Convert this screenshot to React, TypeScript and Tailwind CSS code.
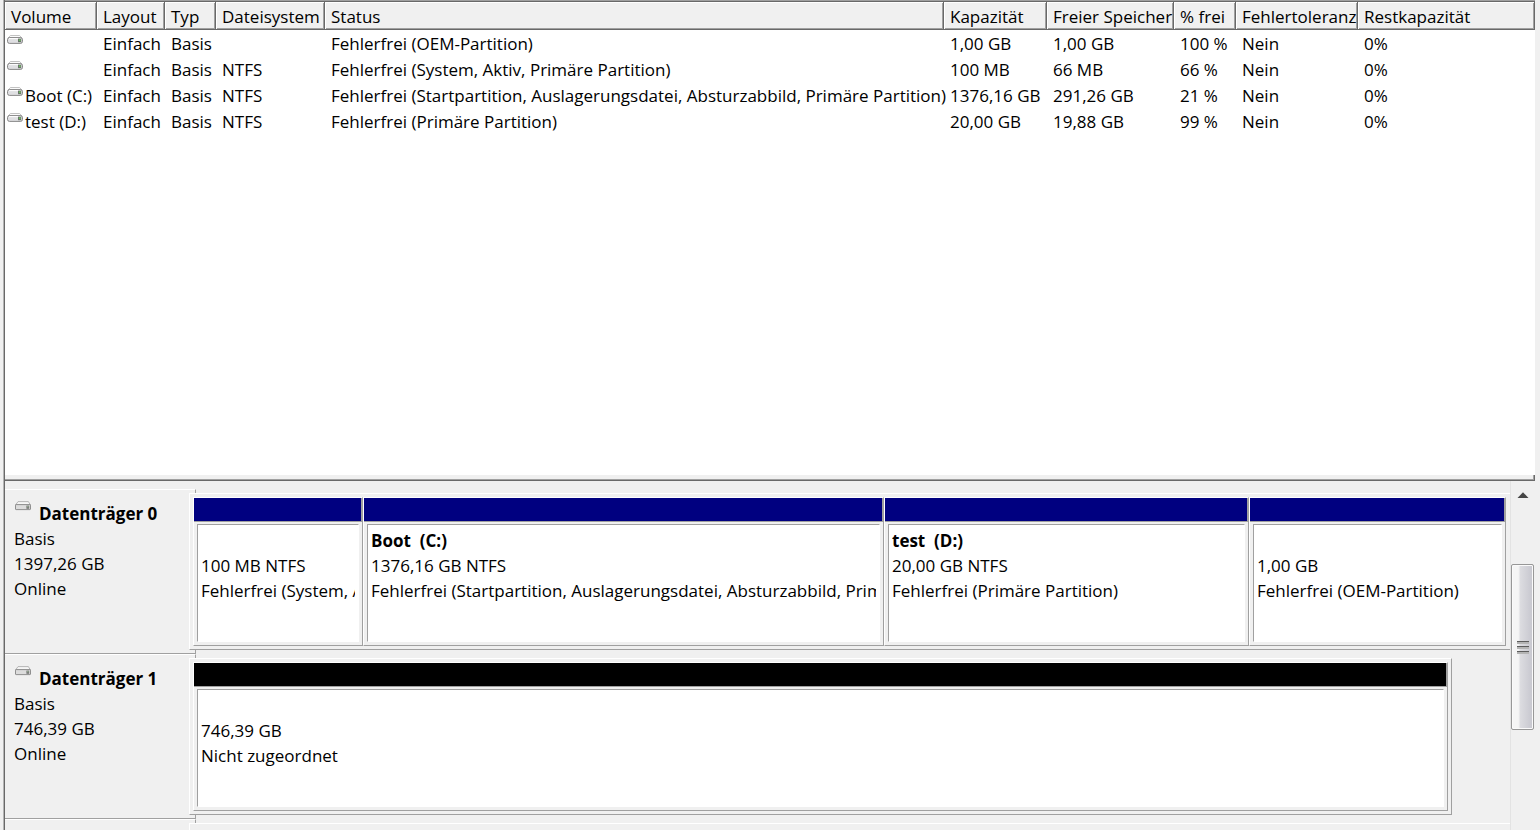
import React from "react";

type Volume = {
  name: string;
  fileSystem: string;
  status: string;
  capacity: string;
  free: string;
  percent: string;
};

const columns = [
  { label: "Volume", width: "w-[92px]" },
  { label: "Layout", width: "w-[68px]" },
  { label: "Typ", width: "w-[51px]" },
  { label: "Dateisystem", width: "w-[109px]" },
  { label: "Status", width: "w-[619px]" },
  { label: "Kapazität", width: "w-[103px]" },
  { label: "Freier Speicher", width: "w-[127px]" },
  { label: "% frei", width: "w-[62px]" },
  { label: "Fehlertoleranz", width: "w-[122px]" },
  { label: "Restkapazität", width: "w-auto" },
];

const volumes: Volume[] = [
  { name: "", fileSystem: "", status: "Fehlerfrei (OEM-Partition)", capacity: "1,00 GB", free: "1,00 GB", percent: "100 %" },
  { name: "", fileSystem: "NTFS", status: "Fehlerfrei (System, Aktiv, Primäre Partition)", capacity: "100 MB", free: "66 MB", percent: "66 %" },
  { name: "Boot (C:)", fileSystem: "NTFS", status: "Fehlerfrei (Startpartition, Auslagerungsdatei, Absturzabbild, Primäre Partition)", capacity: "1376,16 GB", free: "291,26 GB", percent: "21 %" },
  { name: "test (D:)", fileSystem: "NTFS", status: "Fehlerfrei (Primäre Partition)", capacity: "20,00 GB", free: "19,88 GB", percent: "99 %" },
];

function DriveIcon({ muted = false }: { muted?: boolean }) {
  return muted ? (
    <svg viewBox="0 0 16 10" className="h-2.5 w-4 shrink-0" aria-hidden="true">
      <path d="M3 .6h10.4L15.4 4H.6z" fill="#f6f6f6" stroke="#a6a6a6" strokeWidth=".8" />
      <rect x=".5" y="3.6" width="15" height="5" rx=".6" fill="#dcdcdc" stroke="#858585" strokeWidth=".9" />
      <rect x="11.4" y="4.6" width="2.8" height="3.2" fill="#777777" />
      <rect x="12.4" y="5" width="1" height="1.3" fill="#9fc29a" />
    </svg>
  ) : (
    <svg viewBox="0 0 16 10" className="h-2.5 w-4 shrink-0" aria-hidden="true">
      <path d="M3.4.5h9.2L14.8 3H1.2z" fill="#fbfbfb" stroke="#b4b4b4" strokeWidth=".8" />
      <rect x=".5" y="2.6" width="15" height="5.8" rx="2" fill="#dfdfe2" stroke="#7d7d7d" strokeWidth=".9" />
      <path d="M2 3.6h9" stroke="#ffffff" />
      <rect x="11" y="3.8" width="3.2" height="3.4" fill="#687568" />
      <rect x="12.2" y="4.3" width="1.3" height="1.7" fill="#6fce5c" />
    </svg>
  );
}

function VolumeTable() {
  return (
    <table className="w-full table-fixed border-collapse whitespace-nowrap text-left">
      <thead>
        <tr className="h-[29px]">
          {columns.map((c) => (
            <th key={c.label} scope="col" className={`${c.width} p-0 align-top font-normal`}>
              <div className="h-7 border-b border-r border-[#696969] bg-[#f0f0f0] pl-1.5 leading-[29px] shadow-[inset_1px_1px_0_#ffffff,inset_-1px_-1px_0_#a0a0a0]">
                {c.label}
              </div>
            </th>
          ))}
        </tr>
      </thead>
      <tbody>
        {volumes.map((v) => (
          <tr key={v.status} className="h-[26px]">
            <td className="p-0">
              <div className="flex h-[26px] gap-0.5 pl-0.5">
                <span className="pt-1">
                  <DriveIcon />
                </span>
                <span className="leading-[26px]">{v.name}</span>
              </div>
            </td>
            <td className="p-0 pl-1.5">Einfach</td>
            <td className="p-0 pl-1.5">Basis</td>
            <td className="p-0 pl-1.5">{v.fileSystem}</td>
            <td className="p-0 pl-1.5">{v.status}</td>
            <td className="p-0 pl-1.5">{v.capacity}</td>
            <td className="p-0 pl-1.5">{v.free}</td>
            <td className="p-0 pl-1.5">{v.percent}</td>
            <td className="p-0 pl-1.5">Nein</td>
            <td className="p-0 pl-1.5">0%</td>
          </tr>
        ))}
      </tbody>
    </table>
  );
}

function Partition({ title, size, status, bar }: { title?: string; size: string; status: string; bar: string }) {
  return (
    <div className="flex min-w-0 flex-col border border-white border-b-[#a0a0a0] border-r-[#a0a0a0]">
      <div className={`h-[23px] border-r border-[#a0a0a0] ${bar}`} />
      <div className="flex min-h-0 flex-1 border-t border-[#a0a0a0] p-[3px] pt-0.5">
        <div className="min-w-0 flex-1 border border-white border-l-[#a0a0a0] border-t-[#a0a0a0] bg-white px-[3px] pt-[3px]">
          <div className="overflow-hidden whitespace-pre leading-[25px]">
            <p className="h-[25px] font-bold">{title}</p>
            <p>{size}</p>
            <p>{status}</p>
          </div>
        </div>
      </div>
    </div>
  );
}

function DiskRow({ name, size, children, frame }: { name?: string; size?: string; children?: React.ReactNode; frame: string }) {
  return (
    <section className="flex h-[165px] shrink-0">
      <div className="w-[191px] shrink-0 border-b border-r border-t border-[#a0a0a0] border-t-white pl-[9px] pt-[11px] leading-[25px]">
        {name && (
          <>
            <h2 className="flex gap-2 pl-px font-bold">
              <DriveIcon muted />
              <span>{name}</span>
            </h2>
            <p>Basis</p>
            <p>{size}</p>
            <p>Online</p>
          </>
        )}
      </div>
      <div className="-ml-[7px] min-w-0 flex-1 py-1">
        <div className={`relative h-full border-b border-l border-t border-white border-b-[#a0a0a0] bg-[#f0f0f0] p-[3px] ${frame}`}>{children}</div>
      </div>
    </section>
  );
}

function ScrollBar() {
  return (
    <div className="flex w-[25px] shrink-0 flex-col border-l border-[#e3e3e3] bg-[#f0f0f0]">
      <button type="button" aria-label="Nach oben" className="flex h-[27px] items-center justify-center">
        <svg viewBox="0 0 12 6" className="h-1.5 w-3" aria-hidden="true">
          <path d="M.5 6 6 .3 11.5 6z" fill="#454545" />
        </svg>
      </button>
      <div className="mt-14 flex h-[166px] w-[23px] flex-col items-center justify-center gap-0.5 rounded-xs border border-[#979797] bg-linear-to-r from-[#f5f5f5] from-30% via-[#dcdce0] via-40% to-[#c6c6ce] shadow-[inset_0_0_0_1px_#fafafa]">
        <span className="h-[3px] w-3 border-t border-[#5c5c5c] bg-[#b4b4b4]" />
        <span className="h-[3px] w-3 border-t border-[#5c5c5c] bg-[#b4b4b4]" />
        <span className="h-[3px] w-3 border-t border-[#5c5c5c] bg-[#b4b4b4]" />
      </div>
    </div>
  );
}

export default function App() {
  return (
    <main className="h-screen overflow-hidden bg-[#f0f0f0] pl-[3px] pr-[5px] font-['Open_Sans',sans-serif] text-[17px] text-black">
      <div className="h-full border-l border-[#b4b4b4]">
        <div className="grid h-full grid-cols-1 grid-rows-[481fr_349fr] border-l border-[#696969]">
          <div className="flex min-h-0 flex-col border-t border-[#a0a0a0]">
            <div className="min-h-0 flex-1 overflow-hidden border-t border-[#696969] bg-white">
              <VolumeTable />
            </div>
            <div className="h-1.5 border-b border-r border-[#696969] bg-[#f0f0f0] shadow-[inset_-1px_-1px_0_#a0a0a0]" />
          </div>
          <div className="flex min-h-0">
            <div className="flex min-h-0 min-w-0 flex-1 flex-col overflow-hidden pt-2">
              <DiskRow name="Datenträger 0" size="1397,26 GB" frame="pr-1">
                <div className="grid h-full grid-cols-[170fr_521fr_365fr_257fr]">
                  <Partition size="100 MB NTFS" status="Fehlerfrei (System, Aktiv, Primäre Partition)" bar="bg-[#000080]" />
                  <Partition title="Boot  (C:)" size="1376,16 GB NTFS" status="Fehlerfrei (Startpartition, Auslagerungsdatei, Absturzabbild, Primäre Partition)" bar="bg-[#000080]" />
                  <Partition title="test  (D:)" size="20,00 GB NTFS" status="Fehlerfrei (Primäre Partition)" bar="bg-[#000080]" />
                  <Partition size="1,00 GB" status="Fehlerfrei (OEM-Partition)" bar="bg-[#000080]" />
                </div>
              </DiskRow>
              <DiskRow name="Datenträger 1" size="746,39 GB" frame="mr-[58px] border-r border-r-[#a0a0a0]">
                <div className="grid h-full grid-cols-1">
                  <Partition size="746,39 GB" status="Nicht zugeordnet" bar="bg-black" />
                </div>
              </DiskRow>
              <DiskRow frame="" />
            </div>
            <ScrollBar />
          </div>
        </div>
      </div>
    </main>
  );
}
